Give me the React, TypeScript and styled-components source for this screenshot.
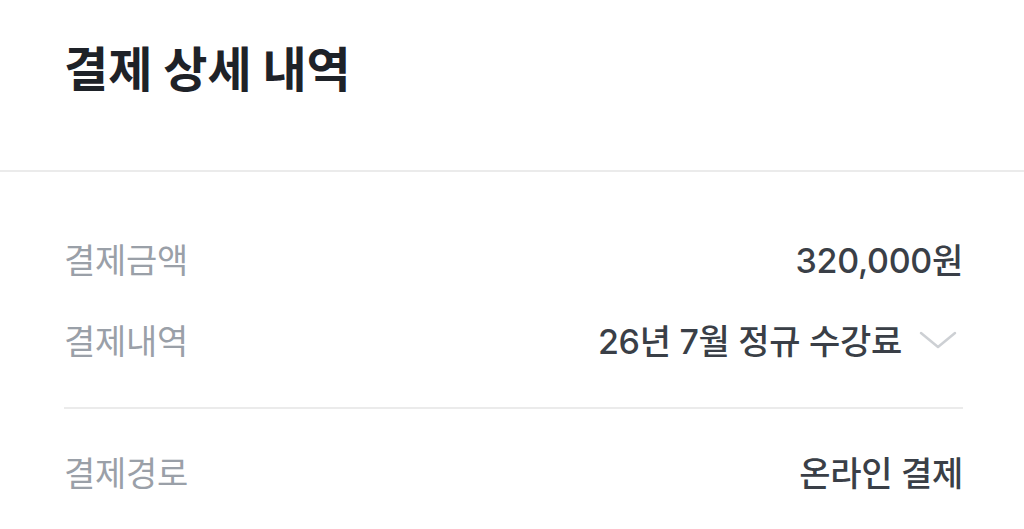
import styled, { createGlobalStyle } from 'styled-components';

const GlobalStyle = createGlobalStyle`
  html, body {
    margin: 0;
    padding: 0;
    background: #ffffff;
  }
  body {
    font-family: 'Noto Sans CJK KR', 'Noto Sans', sans-serif;
    -webkit-font-smoothing: antialiased;
  }
`;

const Sheet = styled.div`
  width: 1024px;
  height: 529px;
  overflow: hidden;
  background: #ffffff;
`;

const Header = styled.header`
  height: 172px;
  padding: 0 64px;
  display: flex;
  align-items: center;
  border-bottom: 2px solid #ebebeb;
  box-sizing: border-box;
`;

const Title = styled.h1`
  margin: 0 0 38px;
  font-size: 48px;
  font-weight: 700;
  color: #1e2228;
`;

const Body = styled.section`
  padding: 46px 61px 0 64px;
`;

const Row = styled.div`
  height: 81px;
  display: flex;
  align-items: center;
  justify-content: space-between;
`;

const Label = styled.span`
  font-size: 34px;
  color: #9aa0a8;
  letter-spacing: -0.3px;
`;

const Value = styled.span`
  display: flex;
  align-items: center;
  gap: 17px;
  font-family: Inter, 'Noto Sans CJK KR', sans-serif;
  font-size: 34px;
  font-weight: 500;
  color: #3a3f47;
  letter-spacing: -0.3px;
`;

const Divider = styled.hr`
  margin: 27px 0 22px;
  border: 0;
  height: 2px;
  background: #ebebeb;
`;

const Chevron = () => (
  <svg width="44" height="20" viewBox="0 0 44 20" fill="none">
    <path d="M2 3 L19 17 L36 3" stroke="#cdd0d4" strokeWidth="2.5" strokeLinecap="round" strokeLinejoin="round" />
  </svg>
);

export default function App() {
  return (
    <Sheet>
      <GlobalStyle />
      <Header>
        <Title>결제 상세 내역</Title>
      </Header>
      <Body>
        <Row>
          <Label>결제금액</Label>
          <Value>320,000원</Value>
        </Row>
        <Row>
          <Label>결제내역</Label>
          <Value>
            26년 7월 정규 수강료
            <Chevron />
          </Value>
        </Row>
        <Divider />
        <Row>
          <Label>결제경로</Label>
          <Value>온라인 결제</Value>
        </Row>
      </Body>
    </Sheet>
  );
}
